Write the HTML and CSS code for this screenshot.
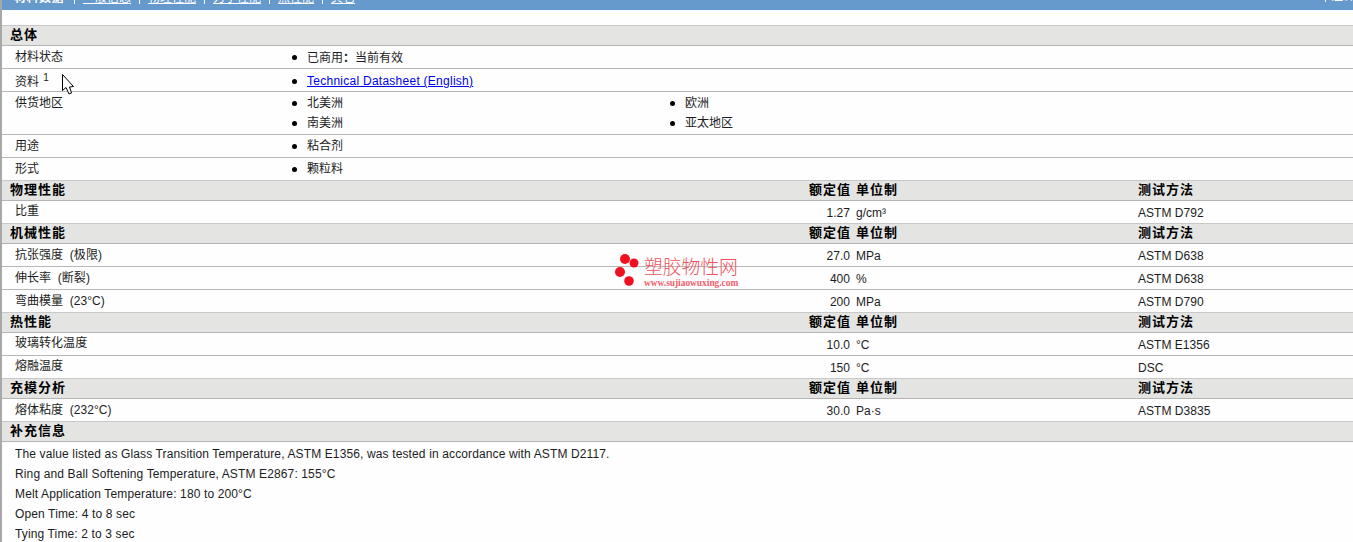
FILE: index.html
```html
<!DOCTYPE html>
<html lang="zh">
<head>
<meta charset="utf-8">
<title>材料数据</title>
<link rel="stylesheet" href="styles.css">
</head>
<body>
<div class="page">
  <nav class="nav">
    <span class="nav-items">
      <a class="nav-item active">材料数据</a><i class="sep first"></i>
      <a class="nav-item">一般信息</a><i class="sep"></i>
      <a class="nav-item">物理性能</a><i class="sep"></i>
      <a class="nav-item">力学性能</a><i class="sep"></i>
      <a class="nav-item">热性能</a><i class="sep"></i>
      <a class="nav-item">其它</a>
    </span>
    <span class="nav-right"><i class="sep"></i><a class="nav-item plain">注释</a></span>
  </nav>

  <section class="sheet">
    <div class="head"><b>总体</b></div>
    <div class="prop"><div class="label">材料状态</div><ul class="vals one"><li>已商用<span class="tc">：</span>当前有效</li></ul></div>
    <div class="prop"><div class="label low">资料 <sup class="note">1</sup></div><ul class="vals one"><li class="low"><a class="link" href="#">Technical Datasheet (English)</a></li></ul></div>
    <div class="prop tall"><div class="label">供货地区</div><ul class="vals two"><li>北美洲</li><li>欧洲</li><li>南美洲</li><li>亚太地区</li></ul></div>
    <div class="prop"><div class="label">用途</div><ul class="vals one"><li>粘合剂</li></ul></div>
    <div class="prop"><div class="label">形式</div><ul class="vals one"><li>颗粒料</li></ul></div>

    <div class="head data"><b>物理性能</b><b class="num">额定值</b><b>单位制</b><b>测试方法</b></div>
    <div class="row"><div class="label up">比重</div><div class="num">1.27</div><div>g/cm³</div><div>ASTM D792</div></div>

    <div class="head data"><b>机械性能</b><b class="num">额定值</b><b>单位制</b><b>测试方法</b></div>
    <div class="row"><div class="label">抗张强度  (极限)</div><div class="num">27.0</div><div>MPa</div><div>ASTM D638</div></div>
    <div class="row"><div class="label">伸长率  (断裂)</div><div class="num">400</div><div>%</div><div>ASTM D638</div></div>
    <div class="row"><div class="label">弯曲模量  (23°C)</div><div class="num">200</div><div>MPa</div><div>ASTM D790</div></div>

    <div class="head data"><b>热性能</b><b class="num">额定值</b><b>单位制</b><b>测试方法</b></div>
    <div class="row"><div class="label up">玻璃转化温度</div><div class="num">10.0</div><div>°C</div><div>ASTM E1356</div></div>
    <div class="row"><div class="label up">熔融温度</div><div class="num">150</div><div>°C</div><div>DSC</div></div>

    <div class="head data"><b>充模分析</b><b class="num">额定值</b><b>单位制</b><b>测试方法</b></div>
    <div class="row"><div class="label">熔体粘度  (232°C)</div><div class="num">30.0</div><div>Pa·s</div><div>ASTM D3835</div></div>

    <div class="head"><b>补充信息</b></div>
    <div class="notes">
      <p>The value listed as Glass Transition Temperature, ASTM E1356, was tested in accordance with ASTM D2117.</p>
      <p>Ring and Ball Softening Temperature, ASTM E2867: 155°C</p>
      <p>Melt Application Temperature: 180 to 200°C</p>
      <p>Open Time: 4 to 8 sec</p>
      <p>Tying Time: 2 to 3 sec</p>
    </div>
  </section>

  <div class="watermark">
    <svg class="wm-logo" width="26" height="36" viewBox="0 0 26 36" aria-hidden="true">
      <circle cx="12" cy="6" r="5" fill="#f01020"/>
      <circle cx="21" cy="10" r="4.5" fill="#f01020"/>
      <circle cx="7" cy="19" r="5" fill="#f01020"/>
      <circle cx="16" cy="28" r="4.8" fill="#f01020"/>
    </svg>
    <div class="wm-text">
      <div class="wm-title">塑胶物性网</div>
      <div class="wm-url">www.sujiaowuxing.com</div>
    </div>
  </div>

  <svg class="cursor" width="14" height="23" viewBox="0 0 14 23" aria-hidden="true">
    <path d="M1.5 1.5 L1.5 17.5 L5 14.5 L8 21 L10.5 20 L8.5 14 L12.5 13.5 Z" fill="#fff" stroke="#000" stroke-width="1"/>
  </svg>
</div>
</body>
</html>
```

FILE: styles.css
```css
* { box-sizing: border-box; }
html, body { margin: 0; padding: 0; background: #fdfefd; }
body {
  height: 542px;
  overflow: hidden;
  font-family: "Liberation Sans", "Noto Sans CJK SC", sans-serif;
  font-size: 12px;
  color: #1c1c24;
}
.page {
  position: relative;
  height: 542px;
  overflow: hidden;
  border-left: 2px solid #a8a8a8;
}
.nav {
  height: 10px;
  background: #6699cc;
  display: flex;
  justify-content: space-between;
  align-items: flex-start;
  overflow: hidden;
  color: #fff;
  padding-left: 12px;
}
.nav-items, .nav-right {
  display: flex;
  align-items: flex-start;
  flex: none;
  line-height: 14px;
  margin-top: -9px;
}
.nav-right { margin-top: -11px; margin-right: -2px; }
.nav-item { text-decoration: underline; white-space: nowrap; }
.nav-item.active { font-weight: bold; text-decoration: none; letter-spacing: .5px; }
.nav-item.plain { text-decoration: none; }
.sep { display: block; width: 1px; height: 13px; background: #fff; margin: 0 8px; }
.sep.first { margin-left: 10px; }
.nav-right .sep { margin: 0 5px 0 0; }

.sheet { margin-top: 15px; }
.head {
  height: 21px;
  background: #e4e4e3;
  border-top: 1px solid #c8c8c8;
  border-bottom: 1px solid #b4b4b4;
  padding-left: 8px;
  font-size: 13px;
  line-height: 18px;
  letter-spacing: 1px;
  color: #000;
}
.head.data, .row {
  display: grid;
  grid-template-columns: 792px 42px 276px 1fr;
  column-gap: 6px;
}
.head .num { text-align: right; margin-right: -1px; white-space: nowrap; }
.row { padding-left: 13px; grid-template-columns: 787px 42px 276px 1fr; height: 22px; line-height: 24px; letter-spacing: .03px; }
.row + .row { height: 23px; border-top: 1px solid #b8b8b8; }
.num { text-align: right; }
.row .label { line-height: 22px; white-space: pre; }
.row .label.up { line-height: 20px; }

.prop { display: flex; padding-left: 13px; height: 22px; }
.prop + .prop { height: 23px; border-top: 1px solid #b8b8b8; }
.prop.tall { height: 43px; }
.prop .label { width: 263px; flex: none; line-height: 22px; }
.prop .label.low { line-height: 26px; }
.vals { margin: 0; padding: 0; list-style: none; display: grid; align-content: start; }
.vals.two { grid-template-columns: 378px 378px; }
.vals li {
  position: relative;
  padding-left: 29px;
  height: 20px;
  line-height: 22px;
}
.vals li::before {
  content: "";
  position: absolute;
  left: 14px;
  top: 9px;
  width: 5px;
  height: 5px;
  border-radius: 50%;
  background: #000;
}
.vals li.low { line-height: 24px; }
.vals li.low::before { top: 10px; }
.tc { font-family: "Noto Sans CJK TC", sans-serif; font-weight: bold; }
.note { font-size: 10px; line-height: 0; vertical-align: 5px; margin-left: 1px; }
.link { color: #0000ee; letter-spacing: .26px; }

.notes { padding: 2px 0 0 13px; letter-spacing: .13px; }
.notes p { margin: 0; height: 20px; line-height: 20px; white-space: nowrap; }

.watermark {
  position: absolute;
  left: 611px;
  top: 253px;
  display: flex;
  gap: 5px;
  color: #f05060;
}
.wm-logo { flex: none; }
.wm-title { font-size: 18.8px; line-height: 26px; font-family: "Noto Sans CJK SC", sans-serif; font-weight: 300; white-space: nowrap; }
.wm-url { font-family: "Liberation Serif", serif; font-size: 9.4px; font-weight: bold; line-height: 9px; white-space: nowrap; color: #f0606e; }
.cursor { position: absolute; left: 59px; top: 73px; }
```
